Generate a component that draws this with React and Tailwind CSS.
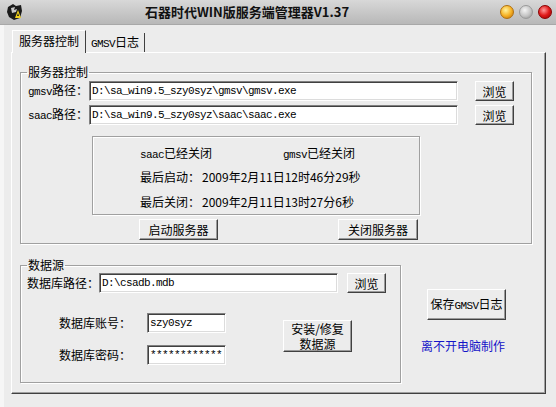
const cjk = "font-['Noto_Sans_CJK_SC',sans-serif]";
const mono = "font-['Liberation_Mono','Noto_Sans_CJK_SC',monospace] text-[11px] tracking-[-0.6px]";

function Btn({ className = "", children }) {
  return (
    <button
      className={`flex shrink-0 items-center justify-center bg-[#ececec] text-[12px] leading-[13px] text-black border border-t-white border-l-white border-r-[#404040] border-b-[#404040] shadow-[inset_-1px_-1px_0_#9a9a9a] ${cjk} ${className}`}
    >
      <span className="block">{children}</span>
    </button>
  );
}

function Field({ className = "", value }) {
  return (
    <input
      readOnly
      defaultValue={value}
      className={`block h-[20px] shrink-0 bg-white pl-[2px] text-black outline-none border border-t-[#808080] border-l-[#808080] border-b-white border-r-white shadow-[inset_1px_1px_0_#404040,inset_-1px_-1px_0_#dcdcdc] ${mono} ${className}`}
    />
  );
}

function Group({ title, className = "", children }) {
  return (
    <fieldset
      className={`border border-[#a0a0a0] shadow-[1px_1px_0_white,inset_1px_1px_0_white] ${className}`}
    >
      <legend className="ml-[6px] px-[1px] text-[12px] leading-[14px]">{title}</legend>
      {children}
    </fieldset>
  );
}

function Ascii({ children }) {
  return <span className={mono}>{children}</span>;
}

function AppIcon() {
  return (
    <svg width="18" height="18" viewBox="0 0 18 18">
      <path d="M2 4 L7 1 L10 3 L15 2 L16 8 L14 15 L8 17 L3 14 L1 9 Z" fill="#1a1a1a" />
      <path d="M5 5 L9 4 L8 7 L11 6 L10 9 L6 10 Z" fill="#c8c8c8" />
      <path d="M9 15 L12 7 L15 15 Z" fill="#f2d21a" />
      <path d="M11 13 L13 13 L12 10 Z" fill="#1a1a1a" />
    </svg>
  );
}

export default function App() {
  return (
    <div className={`flex h-[407px] w-[556px] flex-col overflow-hidden bg-[#ececec] text-black ${cjk}`}>
      {/* title bar */}
      <div className="flex h-[25px] shrink-0 items-center border-b border-[#a8a8a8] bg-gradient-to-b from-[#d8d8d8] to-[#b8b8b8] pl-[6px] pr-[4px]">
        <AppIcon />
        <div className="flex-1 pr-[30px] text-center text-[13px] font-bold leading-[16px] text-[#111]">
          石器时代WIN版服务端管理器V1.37
        </div>
        <div className="flex items-center gap-[5px]">
          <span className="h-[14px] w-[14px] rounded-full border border-[#b07010] bg-[radial-gradient(circle_at_40%_35%,#fff3a0,#f7b52a_50%,#c06a00)]" />
          <span className="h-[14px] w-[14px] rounded-full border border-[#9a9a9a] bg-[radial-gradient(circle_at_40%_35%,#f4f4f4,#c4c4c4_55%,#8c8c8c)]" />
          <span className="h-[14px] w-[14px] rounded-full border border-[#8a0000] bg-[radial-gradient(circle_at_40%_35%,#ff9a9a,#e01a1a_50%,#900000)]" />
        </div>
      </div>

      <div className="flex flex-1">
        <div className="w-[4px] shrink-0 bg-[#f6f6f6]" />
        <div className="flex flex-col pl-[7px] pt-[5px]">
          {/* tabs */}
          <div className="relative z-10 -mb-[1px] flex h-[23px] items-end pl-[1px]">
            <div className="flex h-[23px] w-[74px] items-start justify-center border border-b-0 border-t-white border-l-white border-r-[#404040] bg-[#ececec] pt-[3px] text-[12px] leading-[14px]">
              服务器控制
            </div>
            <div className="mb-[1px] flex h-[19px] w-[59px] items-center justify-center border-r border-r-[#404040] text-[12px] leading-[14px]">
              <span>
                <Ascii>GMSV</Ascii>日志
              </span>
            </div>
          </div>

          {/* tab page */}
          <div className="h-[342px] w-[535px] border border-t-white border-l-white border-r-[#404040] border-b-[#404040] shadow-[inset_-1px_-1px_0_#a0a0a0]">
            <Group title="服务器控制" className="ml-[8px] mt-[12px] h-[179px] w-[512px]">
              <div className="mt-[2px] flex items-center pl-[7px]">
                <span className="w-[61px] text-[12px] leading-[14px]">
                  <Ascii>gmsv</Ascii>路径：
                </span>
                <Field className="w-[369px]" value="D:\sa_win9.5_szy0syz\gmsv\gmsv.exe" />
                <Btn className="ml-[17px] h-[20px] w-[39px]">浏览</Btn>
              </div>
              <div className="mt-[4px] flex items-center pl-[7px]">
                <span className="w-[61px] text-[12px] leading-[14px]">
                  <Ascii>saac</Ascii>路径：
                </span>
                <Field className="w-[369px]" value="D:\sa_win9.5_szy0syz\saac\saac.exe" />
                <Btn className="ml-[17px] h-[20px] w-[39px]">浏览</Btn>
              </div>

              <div className="ml-[71px] mt-[11px] h-[79px] w-[328px] border border-[#a0a0a0] pl-[47px] pt-[9px] text-[12px] leading-[14px] shadow-[1px_1px_0_white,inset_1px_1px_0_white]">
                <div className="flex">
                  <span className="w-[143px]">
                    <Ascii>saac</Ascii>已经关闭
                  </span>
                  <span>
                    <Ascii>gmsv</Ascii>已经关闭
                  </span>
                </div>
                <div className="mt-[8px] flex gap-[2px]">
                  <span>最后启动：</span>
                  <span>2009年2月11日12时46分29秒</span>
                </div>
                <div className="mt-[11px] flex gap-[2px]">
                  <span>最后关闭：</span>
                  <span>2009年2月11日13时27分6秒</span>
                </div>
              </div>

              <div className="mt-[4px] flex">
                <Btn className="ml-[118px] h-[21px] w-[79px]">启动服务器</Btn>
                <Btn className="ml-[120px] h-[21px] w-[80px]">关闭服务器</Btn>
              </div>
            </Group>

            <div className="mt-[14px] flex">
              <Group title="数据源" className="ml-[8px] h-[125px] w-[381px]">
                <div className="mt-[1px] flex items-center pl-[6px]">
                  <span className="w-[72px] text-[12px] leading-[14px]">数据库路径：</span>
                  <Field className="w-[239px]" value="D:\csadb.mdb" />
                  <Btn className="ml-[9px] h-[20px] w-[39px]">浏览</Btn>
                </div>
                <div className="mt-[20px] flex items-start pl-[38px]">
                  <div className="flex flex-col gap-[12px]">
                    <div className="flex items-center gap-[16px]">
                      <span className="w-[72px] text-[12px] leading-[14px]">数据库账号：</span>
                      <Field className="w-[79px]" value="szy0syz" />
                    </div>
                    <div className="flex items-center gap-[16px]">
                      <span className="w-[72px] text-[12px] leading-[14px]">数据库密码：</span>
                      <Field className="w-[79px]" value="************" />
                    </div>
                  </div>
                  <Btn className="ml-[57px] mt-[7px] h-[32px] w-[69px]">
                    <span className="block leading-[15px]">安装/修复</span>
                    <span className="block leading-[15px]">数据源</span>
                  </Btn>
                </div>
              </Group>

              <div className="ml-[20px] flex flex-col items-start">
                <Btn className="ml-[6px] mt-[31px] h-[31px] w-[79px]">
                  保存<Ascii>GMSV</Ascii>日志
                </Btn>
                <span className="mt-[19px] text-[12px] leading-[14px] text-[#1414c8]">离不开电脑制作</span>
              </div>
            </div>
          </div>
        </div>
      </div>
    </div>
  );
}
